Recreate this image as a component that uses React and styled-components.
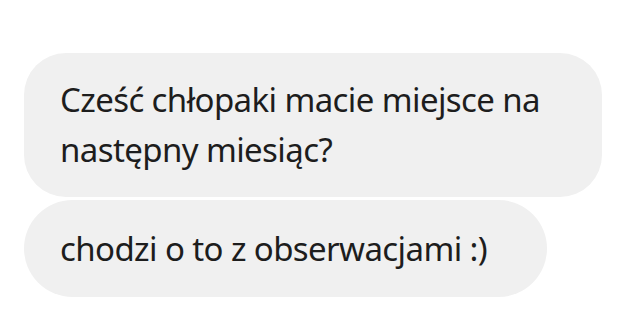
import React from "react";
import styled, { createGlobalStyle } from "styled-components";

const GlobalStyle = createGlobalStyle`
    body {
        margin: 0;
        background: #ffffff;
    }
`;

const Thread = styled.div`
    display: flex;
    flex-direction: column;
    align-items: flex-start;
    gap: 3px;
    padding: 53px 0 0 24px;
    font-family: "Noto Sans", "Open Sans", sans-serif;
`;

const Bubble = styled.div`
    box-sizing: border-box;
    max-width: 578px;
    padding: ${(p) => p.$pad}px ${(p) => p.$right}px ${(p) => p.$pad}px 36px;
    background-color: #f0f0f0;
    border-radius: ${(p) => p.$radius}px;
    color: #1d1d1d;
    font-size: 33px;
    letter-spacing: -0.6px;
    line-height: 50px;
`;

const App = () => {
    return (
        <>
            <GlobalStyle />
            <Thread>
                <Bubble $pad={22} $right={40} $radius={42}>
                    Cześć chłopaki macie miejsce na następny miesiąc?
                </Bubble>
                <Bubble $pad={23.5} $right={60} $radius={49}>
                    chodzi o to z obserwacjami :)
                </Bubble>
            </Thread>
        </>
    );
};

export default App;
